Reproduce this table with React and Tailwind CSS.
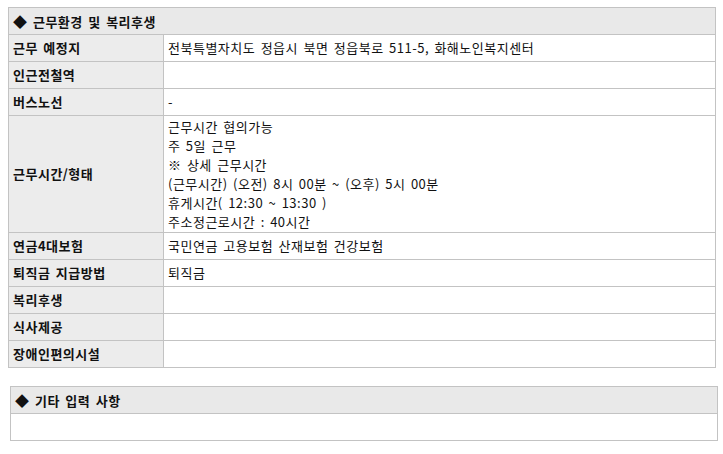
export default function App() {
  const font = { fontFamily: '"Noto Sans CJK KR", "Noto Sans", sans-serif' };
  const rows = [
    ["근무 예정지", "전북특별자치도 정읍시 북면 정읍북로 511-5, 화해노인복지센터"],
    ["인근전철역", ""],
    ["버스노선", "-"],
  ];
  const rows2 = [
    ["연금4대보험", "국민연금 고용보험 산재보험 건강보험"],
    ["퇴직금 지급방법", "퇴직금"],
    ["복리후생", ""],
    ["식사제공", ""],
    ["장애인편의시설", ""],
  ];
  const td = "border border-[#c3c3c3] h-[27px] p-0 text-[13px] text-[#111] tracking-[0.5px] [word-spacing:2px]";
  const label = `${td} bg-[#ececec] pl-[4px] font-bold w-[155px]`;
  const val = `${td} bg-white pl-[4px]`;
  const work = [
    "근무시간 협의가능",
    "주 5일 근무",
    "※ 상세 근무시간",
    "(근무시간) (오전) 8시 00분 ~ (오후) 5시 00분",
    "휴게시간( 12:30 ~ 13:30 )",
    "주소정근로시간 : 40시간",
  ];
  return (
    <div className="bg-white w-[723px] h-[454px] pt-[7px]" style={font}>
      <table className="ml-[8px] w-[708px] border-collapse">
        <tbody>
          <tr>
            <td colSpan={2} className={`${td} bg-[#e9e9e9] pl-[4px] font-bold`}>
              <span className="text-[14px]">◆</span> 근무환경 및 복리후생
            </td>
          </tr>
          {rows.map(([l, v]) => (
            <tr key={l}>
              <td className={label}>{l}</td>
              <td className={val}>{v}</td>
            </tr>
          ))}
          <tr>
            <td className={label}>근무시간/형태</td>
            <td className={`${val} py-[1px]`}>
              <div className="flex flex-col">
                {work.map((w) => (
                  <div key={w} className="h-[19px] leading-[19px]">{w}</div>
                ))}
              </div>
            </td>
          </tr>
          {rows2.map(([l, v]) => (
            <tr key={l}>
              <td className={label}>{l}</td>
              <td className={val}>{v}</td>
            </tr>
          ))}
        </tbody>
      </table>
      <table className="ml-[10px] mt-[18px] w-[708px] border-collapse">
        <tbody>
          <tr>
            <td className={`${td} bg-[#e9e9e9] pl-[4px] font-bold`}>
              <span className="text-[14px]">◆</span> 기타 입력 사항
            </td>
          </tr>
          <tr>
            <td className={`${td} bg-white`}></td>
          </tr>
        </tbody>
      </table>
    </div>
  );
}
